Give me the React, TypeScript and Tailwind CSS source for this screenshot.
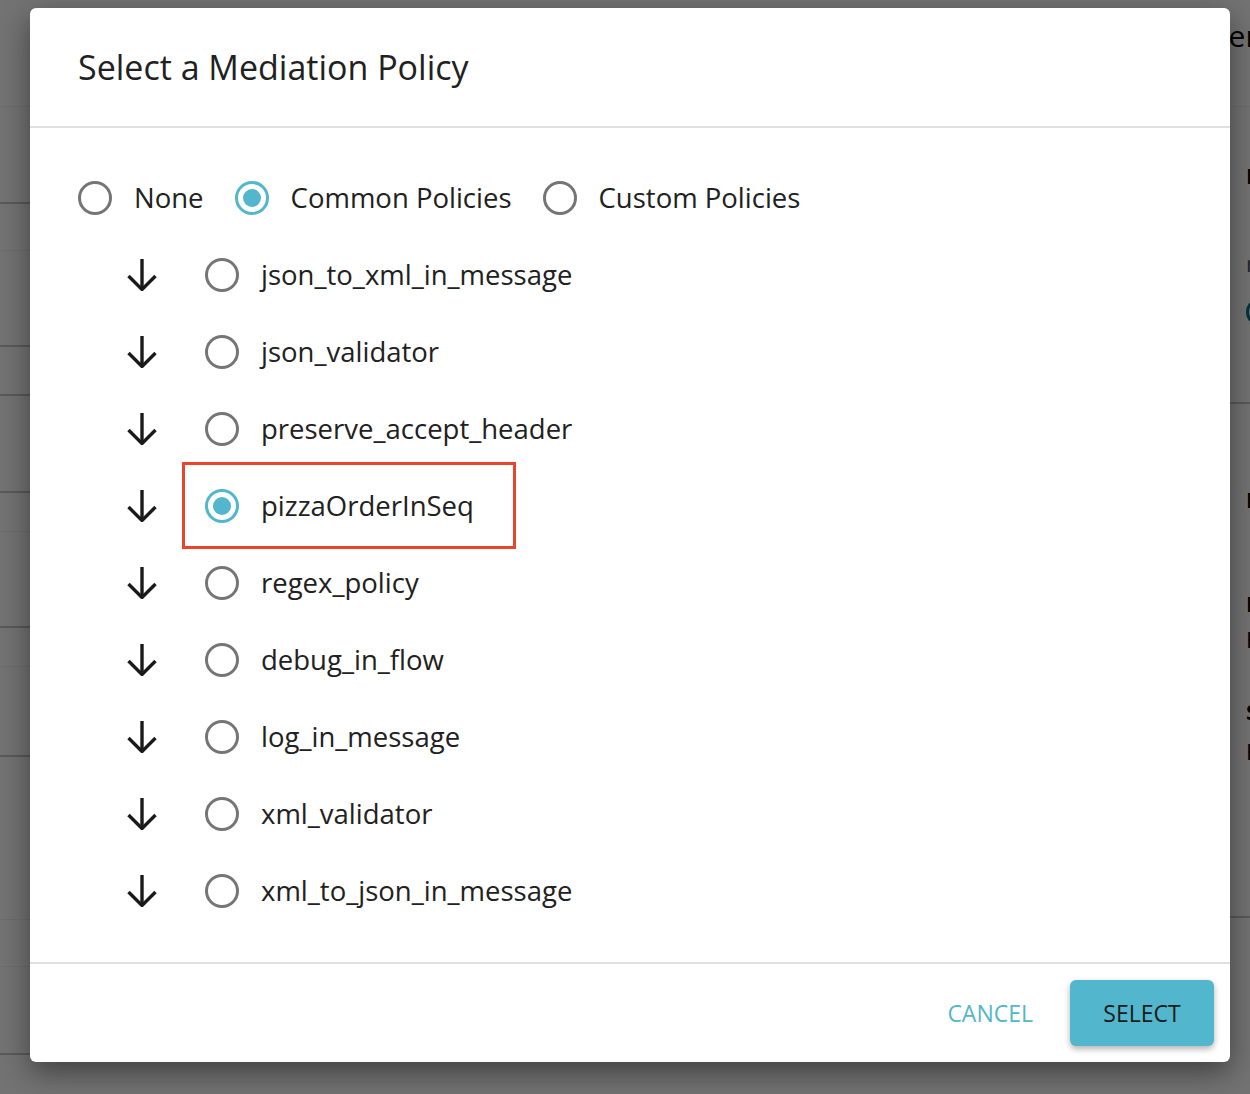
import React from "react";

const policies = [
  "json_to_xml_in_message",
  "json_validator",
  "preserve_accept_header",
  "pizzaOrderInSeq",
  "regex_policy",
  "debug_in_flow",
  "log_in_message",
  "xml_validator",
  "xml_to_json_in_message",
];

function Radio({ checked }: { checked?: boolean }) {
  return checked ? (
    <span className="flex h-[34px] w-[34px] shrink-0 items-center justify-center rounded-full border-[3px] border-[#52b6cc]">
      <span className="h-[18px] w-[18px] rounded-full bg-[#52b6cc]" />
    </span>
  ) : (
    <span className="h-[34px] w-[34px] shrink-0 rounded-full border-[3px] border-[#757575]" />
  );
}

function ArrowDown() {
  return (
    <svg width="32" height="33" viewBox="0 0 32 33" fill="none" stroke="#1a1a1a" strokeWidth="3.4" strokeLinecap="butt" strokeLinejoin="miter">
      <line x1="16" y1="1" x2="16" y2="31" />
      <polyline points="2.5,18 16,31.5 29.5,18" />
    </svg>
  );
}

function Background() {
  return (
    <div className="flex w-[1600px] h-[1094px] bg-white">
      <aside className="w-[240px] shrink-0 flex flex-col">
        <div className="h-[107px] border-b border-[#f2f2f2]" />
        <div className="h-[97px] border-b-2 border-[#c8c8c8]" />
        <div className="h-[47px] border-b border-[#f2f2f2]" />
        <div className="h-[96px] border-b-2 border-[#c8c8c8]" />
        <div className="h-[49px] border-b-2 border-[#c8c8c8]" />
        <div className="h-[97px] border-b-2 border-[#c8c8c8]" />
        <div className="h-[39px] border-b border-[#f2f2f2]" />
        <div className="h-[96px] border-b-2 border-[#c8c8c8]" />
        <div className="h-[39px] border-b border-[#f2f2f2]" />
        <div className="h-[90px] border-b-2 border-[#c8c8c8]" />
        <div className="h-[163px] border-b border-[#f2f2f2]" />
        <div className="h-[47px] border-b border-[#f2f2f2]" />
        <div className="h-[88px] border-b-2 border-[#c8c8c8]" />
      </aside>
      <main className="w-[928px] shrink-0" />
      <section className="w-[432px] shrink-0 flex flex-col text-black">
        <div className="h-[107px] border-b border-[#f2f2f2] pt-[13px]">
          <h2 className="text-[30px] leading-[46px]">Server</h2>
        </div>
        <div className="pl-[78px] pt-[55px] h-[297px] border-b-2 border-[#c8c8c8]">
          <p className="text-[22px] font-bold leading-[26px]">Endpoint Type</p>
          <p className="mt-[62px] text-[22px] text-[#555] leading-[26px]">none</p>
          <span className="mt-[22px] block h-[28px] w-[28px] rounded-full border-[3px] border-[#0f6f86]" />
        </div>
        <div className="pl-[78px] pt-[82px] flex flex-col">
          <p className="text-[22px] font-bold leading-[26px]">Production</p>
          <p className="mt-[78px] text-[22px] font-bold leading-[26px]">Request</p>
          <p className="mt-[10px] text-[22px] leading-[26px]">HTTP</p>
          <p className="mt-[46px] text-[22px] font-bold leading-[26px]">Sandbox</p>
          <p className="mt-[14px] text-[22px] leading-[26px]">HTTP</p>
        </div>
        <div className="mt-[152px] border-b-2 border-[#c8c8c8]" />
      </section>
    </div>
  );
}

export default function App() {
  return (
    <div
      className="relative h-[1094px] w-full overflow-hidden"
      style={{ fontFamily: '"Open Sans", "Noto Sans", sans-serif' }}
    >
      <Background />
      <div className="absolute inset-0 bg-black/55" />
      <div className="absolute left-[30px] top-[8px] flex h-[1054px] w-[1200px] flex-col rounded-[6px] bg-white shadow-[0_10px_30px_rgba(0,0,0,0.45)] text-[#212121]">
        <header className="flex h-[120px] shrink-0 items-center border-b-2 border-[#e0e0e0] px-[48px]">
          <h1 className="text-[34px] leading-none">Select a Mediation Policy</h1>
        </header>
        <div className="flex flex-1 flex-col px-[48px] pt-[31px]">
          <div className="flex h-[77px] items-center text-[27.5px]">
            <label className="flex items-center">
              <Radio />
              <span className="ml-[22px]">None</span>
            </label>
            <label className="ml-[31px] flex items-center">
              <Radio checked />
              <span className="ml-[22px]">Common Policies</span>
            </label>
            <label className="ml-[31px] flex items-center">
              <Radio />
              <span className="ml-[22px]">Custom Policies</span>
            </label>
          </div>
          {policies.map((p) => (
            <div key={p} className="flex h-[77px] items-center pl-[48px] text-[27.5px]">
              <ArrowDown />
              <label className="relative ml-[47px] flex h-[38px] items-center">
                <Radio checked={p === "pizzaOrderInSeq"} />
                <span className="ml-[22px]">{p}</span>
                {p === "pizzaOrderInSeq" && (
                  <span className="pointer-events-none absolute left-[-23px] right-[-42px] top-[-25px] bottom-[-24px] border-[3px] border-[#e9452e]" />
                )}
              </label>
            </div>
          ))}
        </div>
        <footer className="flex h-[100px] shrink-0 items-center justify-end border-t-2 border-[#e0e0e0] pr-[16px]">
          <button className="mr-[37px] text-[23px] text-[#52b6cc]">CANCEL</button>
          <button className="flex h-[66px] w-[144px] items-center justify-center rounded-[6px] bg-[#52b6cc] text-[23px] text-[#1a1a1a] shadow-[0_3px_6px_rgba(0,0,0,0.3)]">
            SELECT
          </button>
        </footer>
      </div>
    </div>
  );
}
